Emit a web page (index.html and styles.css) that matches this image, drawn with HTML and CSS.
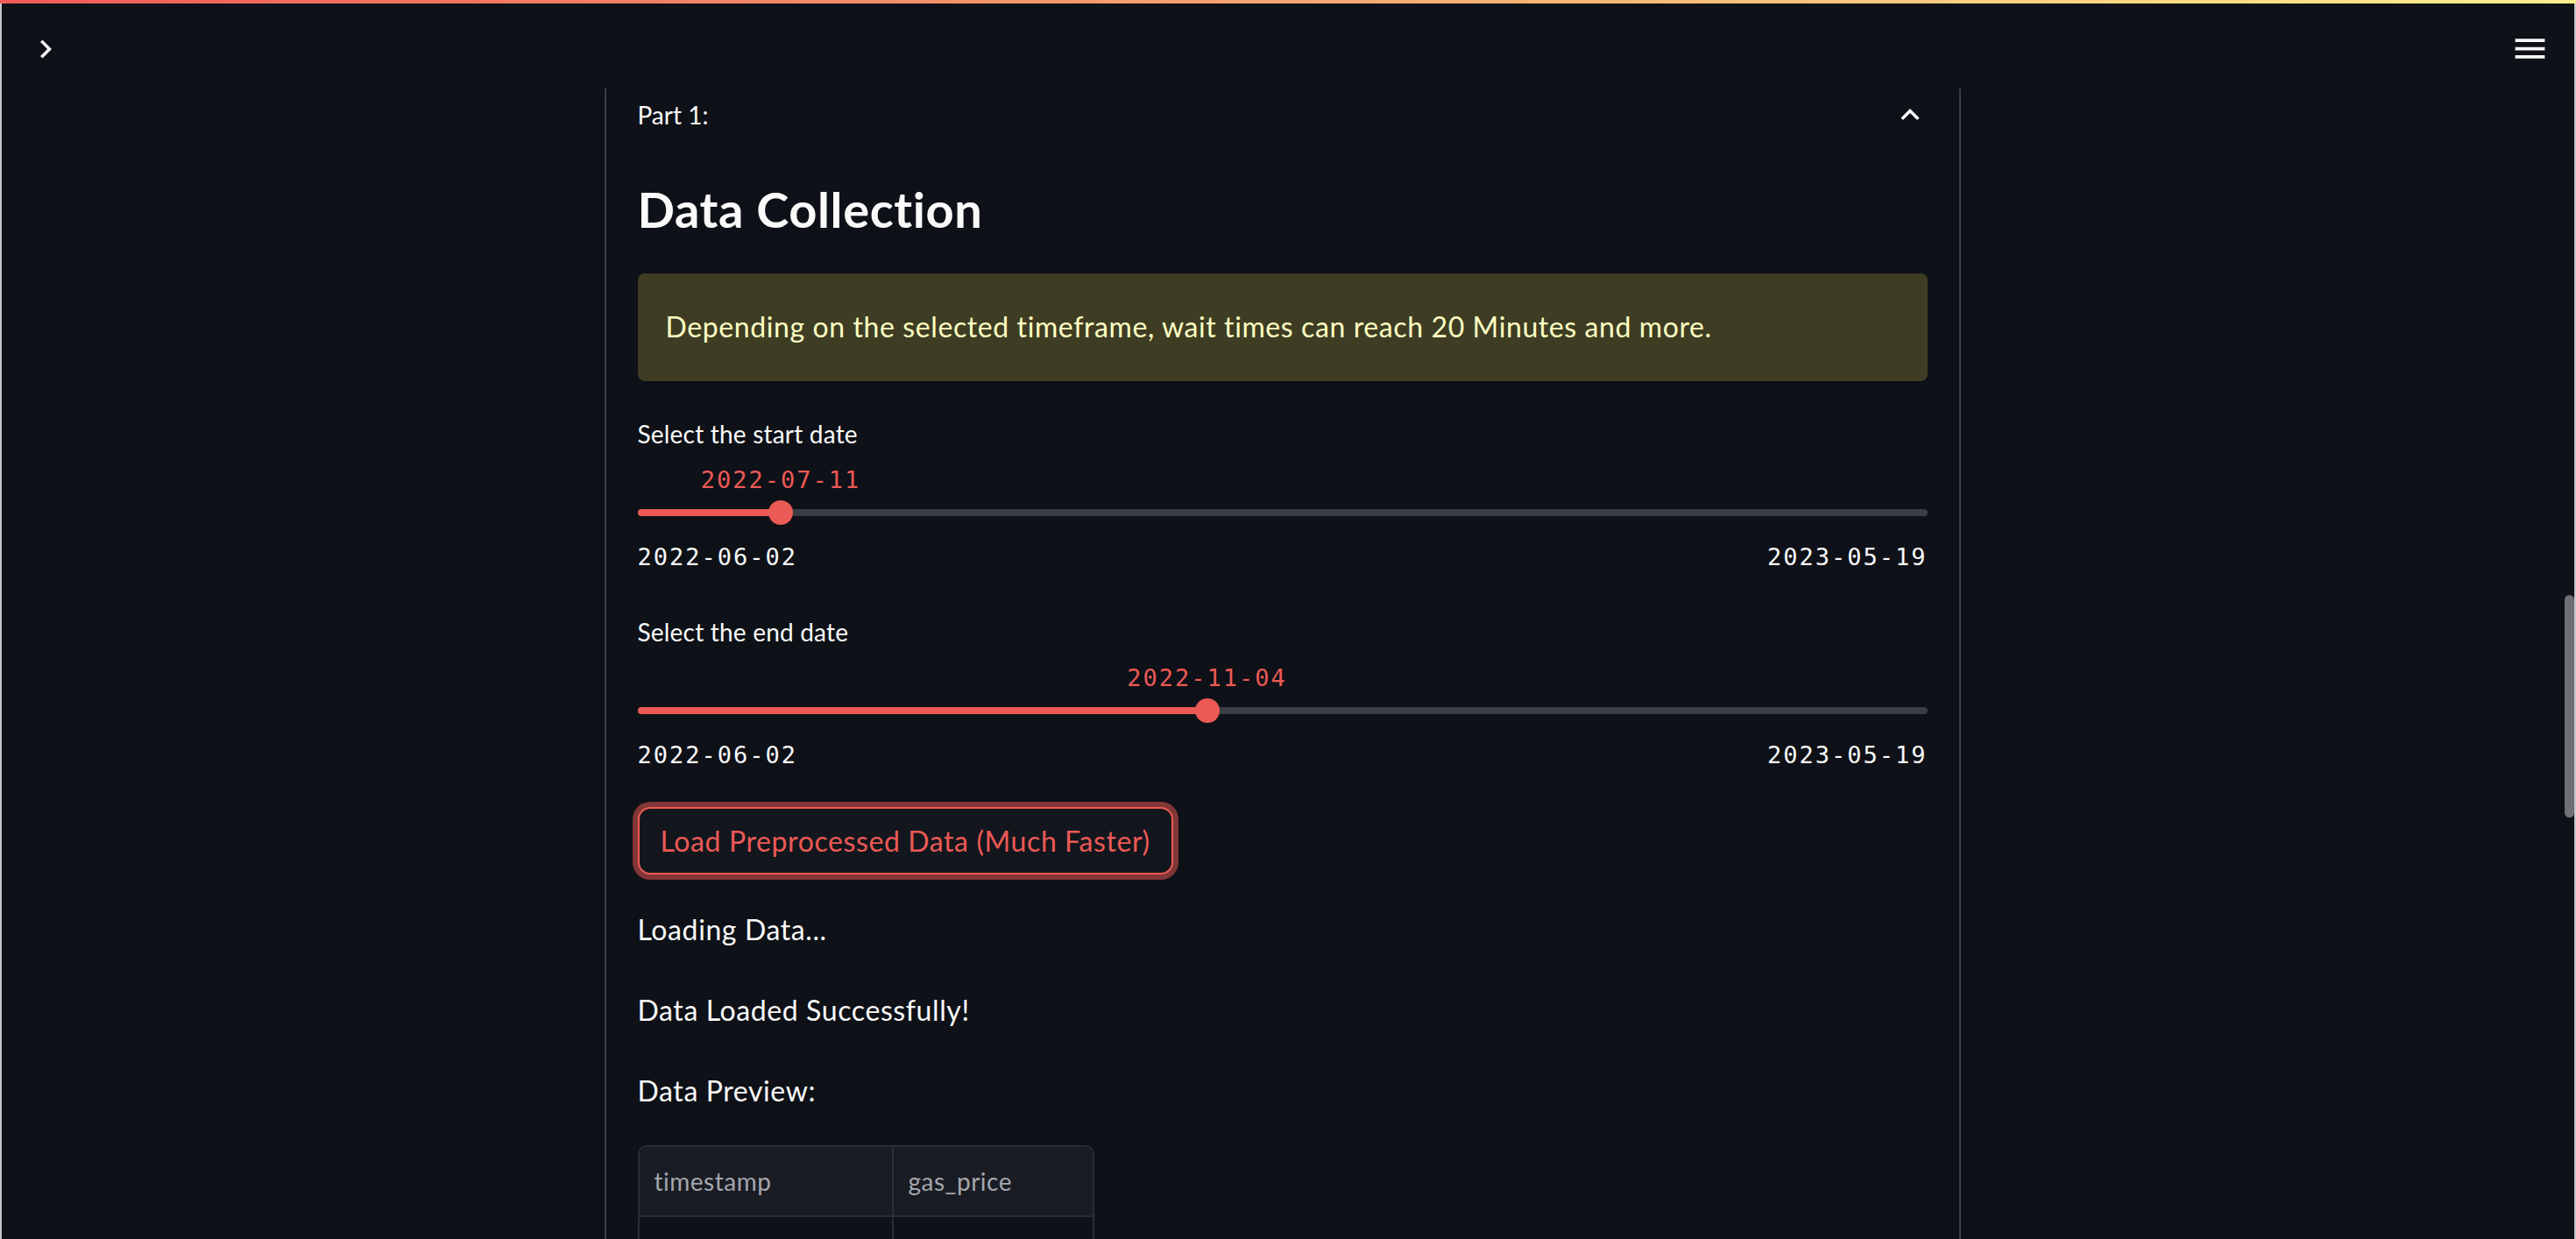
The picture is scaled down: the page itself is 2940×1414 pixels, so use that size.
FILE: index.html
```html
<!DOCTYPE html>
<html lang="en">
<head>
<meta charset="utf-8">
<title>Data Collection</title>
<link rel="stylesheet" href="styles.css">
</head>
<body>
<div class="decoration"></div>
<div class="window">
  <div class="page">
    <header class="header">
      <svg class="icon-chevron" width="42" height="42" viewBox="0 0 24 24"><path fill="#fafafa" d="M8.59 16.59L13.17 12 8.59 7.41 10 6l6 6-6 6-1.41-1.41z"/></svg>
      <svg class="icon-menu" width="45" height="45" viewBox="0 0 24 24"><path fill="#fafafa" d="M3 18h18v-2H3v2zm0-5h18v-2H3v2zm0-7v2h18V6H3z"/></svg>
    </header>
    <main class="main">
      <section class="expander">
        <div class="summary">
          <span class="summary-label">Part 1:</span>
          <svg class="icon-up" width="42" height="42" viewBox="0 0 24 24"><path fill="#fafafa" d="M7.41 15.41L12 10.83l4.59 4.58L18 14l-6-6-6 6z"/></svg>
        </div>
        <div class="content">
          <h2 class="title">Data Collection</h2>
          <div class="alert">Depending on the selected timeframe, wait times can reach 20 Minutes and more.</div>

          <div class="slider">
            <div class="slider-label">Select the start date</div>
            <div class="slider-body">
              <div class="value-row"><span class="value" style="left: 11.11%">2022-07-11</span></div>
              <div class="track-row">
                <div class="track"><div class="fill" style="width: 11.11%"></div></div>
                <div class="thumb" style="left: 11.11%"></div>
              </div>
              <div class="minmax"><span>2022-06-02</span><span>2023-05-19</span></div>
            </div>
          </div>

          <div class="slider slider-second">
            <div class="slider-label">Select the end date</div>
            <div class="slider-body">
              <div class="value-row"><span class="value" style="left: 44.16%">2022-11-04</span></div>
              <div class="track-row">
                <div class="track"><div class="fill" style="width: 44.16%"></div></div>
                <div class="thumb" style="left: 44.16%"></div>
              </div>
              <div class="minmax"><span>2022-06-02</span><span>2023-05-19</span></div>
            </div>
          </div>

          <div class="button-row"><button class="btn">Load Preprocessed Data (Much Faster)</button></div>

          <p class="text text-first">Loading Data...</p>
          <p class="text">Data Loaded Successfully!</p>
          <p class="text">Data Preview:</p>

          <div class="table">
            <div class="row head">
              <div class="cell c1">timestamp</div>
              <div class="cell c2">gas_price</div>
            </div>
            <div class="row">
              <div class="cell c1"></div>
              <div class="cell c2"></div>
            </div>
          </div>
        </div>
      </section>
    </main>
  </div>
  <div class="scrollbar"><div class="scroll-thumb"></div></div>
</div>
</body>
</html>
```

FILE: styles.css
```css
* { box-sizing: border-box; }

html, body {
  margin: 0;
  padding: 0;
  height: 1414px;
  overflow: hidden;
  background: #0e1117;
}

body {
  font-family: Lato, "Noto Sans", sans-serif;
  color: #fafafa;
}

.decoration {
  height: 4px;
  background: linear-gradient(90deg, #ef5b57, #fdf08b);
}

.window {
  height: 1410px;
  display: flex;
  border-left: 2px solid #c8c8c8;
  border-right: 2px solid #c8c8c8;
  overflow: hidden;
}

.page {
  flex: 1;
  display: flex;
  flex-direction: column;
  min-width: 0;
}

.header {
  height: 97px;
  flex: none;
  display: flex;
  justify-content: space-between;
  align-items: flex-start;
  padding: 0 15px 0 29px;
}

.icon-chevron { margin-top: 31px; display: block; }
.icon-menu { margin-top: 29px; display: block; }

.main {
  flex: 1;
  display: flex;
  justify-content: center;
}

.expander {
  width: 1548px;
  border-left: 2px solid #3d3f46;
  border-right: 2px solid #3d3f46;
}

.summary {
  display: flex;
  justify-content: space-between;
  align-items: center;
  padding: 10px 35px 12px 36px;
  height: 62px;
}

.summary-label {
  font-size: 28px;
  line-height: 40px;
}

.icon-up { display: block; }

.content {
  padding: 0 36px;
}

.title {
  margin: 40px 0 0;
  font-size: 56px;
  line-height: 72px;
  font-weight: 700;
  letter-spacing: 0.6px;
}

.alert {
  margin-top: 37px;
  height: 123px;
  padding: 35px 32px 0;
  background: #3e3d24;
  color: #ffffc2;
  border-radius: 8px;
  font-size: 32px;
  line-height: 51px;
  letter-spacing: 0.6px;
}

.slider {
  margin-top: 40px;
}

.slider-second {
  margin-top: 49px;
}

.slider-label {
  font-size: 28px;
  line-height: 40px;
  letter-spacing: 0.2px;
}

.slider-body {
  margin-top: 17px;
}

.value-row {
  position: relative;
  height: 32px;
}

.value {
  position: absolute;
  top: 0;
  transform: translateX(-50%);
  font-family: "DejaVu Sans Mono", monospace;
  font-size: 27px;
  line-height: 32px;
  letter-spacing: 2px;
  color: #eb5a55;
  white-space: nowrap;
}

.track-row {
  position: relative;
  height: 28px;
  margin-top: 7px;
  display: flex;
  align-items: center;
}

.track {
  width: 100%;
  height: 8px;
  border-radius: 4px;
  background: #3b3d45;
  overflow: hidden;
}

.fill {
  height: 100%;
  background: #eb5a55;
}

.thumb {
  position: absolute;
  top: 0;
  width: 28px;
  height: 28px;
  margin-left: -14px;
  border-radius: 50%;
  background: #eb5a55;
}

.minmax {
  margin-top: 21px;
  display: flex;
  justify-content: space-between;
  font-family: "DejaVu Sans Mono", monospace;
  font-size: 27px;
  line-height: 32px;
  letter-spacing: 2px;
  color: #fafafa;
}

.button-row {
  margin-top: 43px;
  display: flex;
}

.btn {
  height: 77px;
  padding: 0 24px;
  display: flex;
  align-items: center;
  justify-content: center;
  background: #13161d;
  color: #eb5a55;
  border: 2px solid #eb5a55;
  border-radius: 14px;
  box-shadow: 0 0 0 6px #823636;
  font-family: Lato, "Noto Sans", sans-serif;
  font-size: 32px;
  letter-spacing: 0.6px;
}

.text {
  margin: 41px 0 0;
  font-size: 32px;
  line-height: 51px;
  letter-spacing: 0.6px;
}

.text-first {
  margin-top: 37px;
}

.table {
  margin-top: 37px;
  width: 521px;
  border: 2px solid #2b2d34;
  border-radius: 10px 10px 0 0;
  overflow: hidden;
}

.row {
  display: flex;
  height: 78px;
}

.row + .row {
  border-top: 2px solid #2b2d34;
}

.head {
  background: #1a1c23;
}

.cell {
  display: flex;
  align-items: center;
  padding-left: 17px;
  font-size: 28px;
  letter-spacing: 0.5px;
  color: #a3a6ad;
}

.c1 {
  width: 290px;
  border-right: 2px solid #2b2d34;
}

.c2 {
  flex: 1;
}

.scrollbar {
  width: 13px;
  flex: none;
  padding: 675px 0 0 2px;
}

.scroll-thumb {
  width: 11px;
  height: 254px;
  border-radius: 6px;
  background: #6f7075;
}
```
